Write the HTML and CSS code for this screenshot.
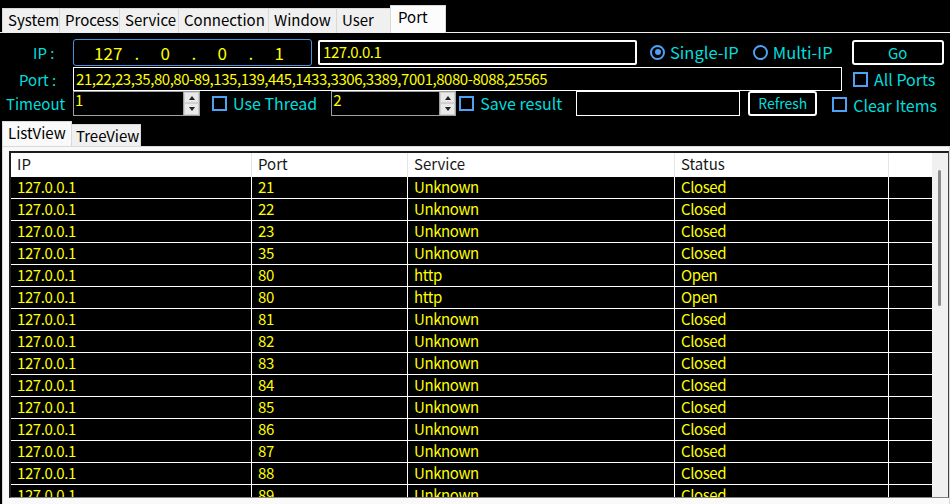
FILE: index.html
```html
<!DOCTYPE html>
<html>
<head>
<meta charset="utf-8">
<link rel="stylesheet" href="styles.css">
</head>
<body>
<div class="app">
  <div class="tabstrip">
    <div class="tab t-system">System</div>
    <div class="tab t-process">Process</div>
    <div class="tab t-service">Service</div>
    <div class="tab t-conn">Connection</div>
    <div class="tab t-window">Window</div>
    <div class="tab t-user">User</div>
    <div class="tab tab-active t-port">Port</div>
  </div>
  <div class="panel">
    <div class="row row1">
      <div class="lbl lbl-ip">IP :</div>
      <div class="ipbox">
        <span>127</span><span>.</span><span>0</span><span>.</span><span>0</span><span>.</span><span>1</span>
      </div>
      <div class="tbox tbox-ip">127.0.0.1</div>
      <div class="radio radio-on r-single"><span class="dot"></span>Single-IP</div>
      <div class="radio r-multi"><span class="dot"></span>Multi-IP</div>
      <div class="btn btn-go">Go</div>
    </div>
    <div class="row row2">
      <div class="lbl lbl-port">Port :</div>
      <div class="tbox tbox-port">21,22,23,35,80,80-89,135,139,445,1433,3306,3389,7001,8080-8088,25565</div>
      <div class="check c-all"><span class="box"></span>All Ports</div>
    </div>
    <div class="row row3">
      <div class="lbl lbl-timeout">Timeout</div>
      <div class="num num1"><span class="val">1</span><span class="spin"><span class="sb sb-up"></span><span class="sb sb-down"></span></span></div>
      <div class="check c-thread"><span class="box"></span>Use Thread</div>
      <div class="num num2"><span class="val">2</span><span class="spin"><span class="sb sb-up"></span><span class="sb sb-down"></span></span></div>
      <div class="check c-save"><span class="box"></span>Save result</div>
      <div class="tbox tbox-save"></div>
      <div class="btn btn-refresh">Refresh</div>
      <div class="check c-clear"><span class="box"></span>Clear Items</div>
    </div>
  </div>
  <div class="subtabs">
    <div class="stab stab-active">ListView</div>
    <div class="stab">TreeView</div>
  </div>
  <div class="page">
    <div class="list">
      <div class="lv">
        <div class="hdr">
          <div class="c c-ip">IP</div>
          <div class="c c-port">Port</div>
          <div class="c c-svc">Service</div>
          <div class="c c-st">Status</div>
          <div class="c c-x"></div>
        </div>
        <div class="rows">
          <div class="r"><div class="c c-ip">127.0.0.1</div><div class="c c-port">21</div><div class="c c-svc">Unknown</div><div class="c c-st">Closed</div><div class="c c-x"></div></div>
          <div class="r"><div class="c c-ip">127.0.0.1</div><div class="c c-port">22</div><div class="c c-svc">Unknown</div><div class="c c-st">Closed</div><div class="c c-x"></div></div>
          <div class="r"><div class="c c-ip">127.0.0.1</div><div class="c c-port">23</div><div class="c c-svc">Unknown</div><div class="c c-st">Closed</div><div class="c c-x"></div></div>
          <div class="r"><div class="c c-ip">127.0.0.1</div><div class="c c-port">35</div><div class="c c-svc">Unknown</div><div class="c c-st">Closed</div><div class="c c-x"></div></div>
          <div class="r"><div class="c c-ip">127.0.0.1</div><div class="c c-port">80</div><div class="c c-svc">http</div><div class="c c-st">Open</div><div class="c c-x"></div></div>
          <div class="r"><div class="c c-ip">127.0.0.1</div><div class="c c-port">80</div><div class="c c-svc">http</div><div class="c c-st">Open</div><div class="c c-x"></div></div>
          <div class="r"><div class="c c-ip">127.0.0.1</div><div class="c c-port">81</div><div class="c c-svc">Unknown</div><div class="c c-st">Closed</div><div class="c c-x"></div></div>
          <div class="r"><div class="c c-ip">127.0.0.1</div><div class="c c-port">82</div><div class="c c-svc">Unknown</div><div class="c c-st">Closed</div><div class="c c-x"></div></div>
          <div class="r"><div class="c c-ip">127.0.0.1</div><div class="c c-port">83</div><div class="c c-svc">Unknown</div><div class="c c-st">Closed</div><div class="c c-x"></div></div>
          <div class="r"><div class="c c-ip">127.0.0.1</div><div class="c c-port">84</div><div class="c c-svc">Unknown</div><div class="c c-st">Closed</div><div class="c c-x"></div></div>
          <div class="r"><div class="c c-ip">127.0.0.1</div><div class="c c-port">85</div><div class="c c-svc">Unknown</div><div class="c c-st">Closed</div><div class="c c-x"></div></div>
          <div class="r"><div class="c c-ip">127.0.0.1</div><div class="c c-port">86</div><div class="c c-svc">Unknown</div><div class="c c-st">Closed</div><div class="c c-x"></div></div>
          <div class="r"><div class="c c-ip">127.0.0.1</div><div class="c c-port">87</div><div class="c c-svc">Unknown</div><div class="c c-st">Closed</div><div class="c c-x"></div></div>
          <div class="r"><div class="c c-ip">127.0.0.1</div><div class="c c-port">88</div><div class="c c-svc">Unknown</div><div class="c c-st">Closed</div><div class="c c-x"></div></div>
          <div class="r"><div class="c c-ip">127.0.0.1</div><div class="c c-port">89</div><div class="c c-svc">Unknown</div><div class="c c-st">Closed</div><div class="c c-x"></div></div>
        </div>
      </div>
      <div class="vscroll"><div class="thumb"></div></div>
    </div>
  </div>
</div>
</body>
</html>
```
FILE: styles.css
```css
* { box-sizing: border-box; }
html, body { margin: 0; padding: 0; }
body {
  background: #000;
  width: 950px;
  height: 504px;
  overflow: hidden;
  font-family: "Noto Sans CJK TC", "Noto Sans", sans-serif;
}
.app { width: 950px; height: 504px; display: flex; flex-direction: column; }
.app > * { flex-shrink: 0; }

/* top tabs */
.tabstrip {
  height: 33px;
  display: flex;
  align-items: flex-end;
  padding-left: 2px;
  border-bottom: 1px solid #f0f0f0;
}
.tab {
  height: 25px;
  margin-bottom: -1px;
  background: #f0f0f0;
  border: 1px solid #d9d9d9;
  border-bottom: none;
  margin-right: -1px;
  font-size: 15px;
  line-height: 22px;
  color: #000;
  padding-left: 5px;
  white-space: nowrap;
}
.tab-active {
  height: 28px;
  background: #fcfcfc;
  line-height: 22px;
  padding-left: 7px;
  z-index: 1;
}
.t-system { width: 58px; }
.t-process { width: 61px; }
.t-service { width: 60px; }
.t-conn { width: 91px; }
.t-window { width: 69px; }
.t-user { width: 55px; }
.t-port { width: 56px; }

/* panel */
.panel { height: 87px; padding-top: 5px; color: #00dede; }
.row { display: flex; align-items: center; }
.row1 { height: 28px; }
.row2 { height: 24px; margin-top: 1px; }
.row3 { height: 26px; margin-top: -1px; }
.lbl { width: 73px; font-size: 15px; color: #00dede; white-space: nowrap; }
.lbl-ip { padding-left: 33px; }
.lbl-port { padding-left: 19px; }
.lbl-timeout { padding-left: 6px; }

.ipbox {
  width: 239px;
  height: 27px;
  border: 1px solid #4a90dc;
  border-radius: 3px;
  display: grid;
  grid-template-columns: repeat(7, 28.5px);
  padding-left: 20px;
  align-items: center;
  color: #ffff00;
  font-size: 17px;
}
.ipbox span { text-align: center; }

.tbox {
  border: 1px solid #fff;
  color: #ffff00;
  font-size: 15px;
  letter-spacing: -0.45px;
  padding-left: 3px;
  white-space: nowrap;
  overflow: hidden;
}
.tbox-ip { width: 319px; height: 25px; margin-left: 6px; border-width: 2px; border-radius: 2px; line-height: 20px; }
.tbox-port { width: 769px; height: 24px; line-height: 21px; padding-left: 2px; }
.tbox-save { width: 164px; height: 25px; margin-left: 14px; }

.radio, .check {
  display: flex;
  align-items: center;
  color: #00dede;
  white-space: nowrap;
}
.radio { font-size: 16.5px; }
.check { font-size: 16px; }
.dot {
  width: 15px; height: 15px;
  border: 2px solid #4ea1f3;
  border-radius: 50%;
  margin-right: 5px;
  position: relative;
}
.radio-on .dot::after {
  content: "";
  position: absolute;
  left: 2.5px; top: 2.5px;
  width: 6px; height: 6px;
  border-radius: 50%;
  background: #4ea1f3;
}
.r-single { margin-left: 13px; }
.r-multi { margin-left: 14px; }
.box {
  width: 15px; height: 15px;
  border: 2px solid #4ea1f3;
  margin-right: 6px;
}

.btn {
  border: 2px solid #fff;
  border-radius: 3px;
  color: #00dede;
  display: flex;
  align-items: center;
  justify-content: center;
}
.btn-go { width: 92px; height: 25px; margin-left: 19px; font-size: 15px; }
.btn-refresh { width: 69px; height: 25px; margin-left: 8px; font-size: 14px; }

.c-all { margin-left: 11px; }
.c-thread { margin-left: 12px; }
.c-save { margin-left: 3px; }
.c-clear { margin-left: 15px; margin-top: 3px; }

.num {
  height: 25px;
  border: 1px solid #a0a0a0;
  display: flex;
  justify-content: space-between;
}
.num1 { width: 127px; }
.num2 { width: 125px; margin-left: 14px; }
.val { color: #ffff00; font-size: 15px; line-height: 15px; padding-left: 1px; }
.spin {
  width: 16px;
  display: flex;
  flex-direction: column;
  background: #f0f0f0;
  border-left: 1px solid #a0a0a0;
}
.sb { flex: 1; position: relative; background: #e9e9e9; border: 1px solid #cfcfcf; }
.sb-up::after, .sb-down::after {
  content: "";
  position: absolute;
  left: 4px;
  top: 3px;
  border-left: 3px solid transparent;
  border-right: 3px solid transparent;
}
.sb-up::after { border-bottom: 4px solid #222; }
.sb-down::after { border-top: 4px solid #222; }

/* sub tabs */
.subtabs {
  height: 26px;
  display: flex;
  align-items: flex-end;
  padding-left: 2px;
}
.stab {
  width: 70px;
  height: 22px;
  background: #f0f0f0;
  border: 1px solid #d9d9d9;
  border-bottom: none;
  font-size: 15px;
  line-height: 21px;
  padding-left: 4px;
  color: #000;
  margin-right: -1px;
}
.stab-active {
  height: 25px;
  background: #f9f9f9;
  line-height: 21px;
  padding-left: 5px;
  width: 70px;
  z-index: 1;
}

.page {
  height: 358px;
  margin-left: 2px;
  background: #f9f9f9;
  border: 1px solid #d9d9d9;
  border-bottom: none;
  padding: 4px 0 0 6px;
  overflow: hidden;
}
.list {
  height: 347px;
  display: flex;
  border-top: 2px solid #1c1c1c;
  border-left: 2px solid #1c1c1c;
  border-right: 1px solid #444;
  border-bottom: 1px solid #828282;
  background: #fff;
  overflow: hidden;
}
.lv { width: 921px; }
.hdr { height: 24px; display: flex; background: #fff; }
.hdr .c {
  color: #1a1a1a;
  font-size: 15px;
  line-height: 22px;
  border-right: 1px solid #e5e5e5;
}
.c { padding-left: 6px; white-space: nowrap; overflow: hidden; }
.c-ip { width: 241px; }
.c-port { width: 156px; }
.c-svc { width: 267px; }
.c-st { width: 214px; }
.c-x { width: 43px; }
.hdr .c-x { border-right: none; }
.rows { background: #000; }
.r { height: 22px; display: flex; border-bottom: 1px solid #fff; }
.r .c {
  color: #ffff00;
  font-size: 15px;
  letter-spacing: -0.4px;
  line-height: 20px;
  border-right: 1px solid #fff;
}
.r .c-x { border-right: none; }
.vscroll {
  width: 16px;
  background: #f0f0f0;
  position: relative;
}
.thumb {
  position: absolute;
  left: 6px;
  top: 17px;
  width: 3px;
  height: 136px;
  border-radius: 2px;
  background: #8a8a8a;
}
```
